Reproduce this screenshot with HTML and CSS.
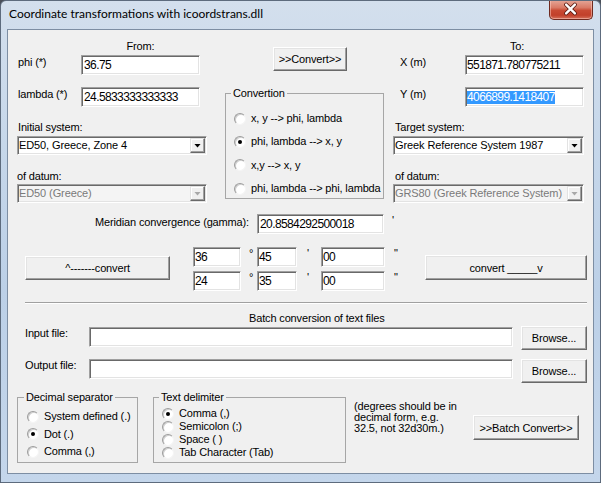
FILE: index.html
```html
<!DOCTYPE html>
<html>
<head>
<meta charset="utf-8">
<link rel="stylesheet" href="styles.css">
</head>
<body>
<div class="window">
  <div class="titlebar">
    <span class="title">Coordinate transformations with icoordstrans.dll</span>
    <div class="close">
      <svg width="44" height="20" viewBox="0 0 44 20">
        <path d="M17.5 5.5 L26.5 14.5 M26.5 5.5 L17.5 14.5" stroke="#5a1d14" stroke-width="4.2" stroke-linecap="round" fill="none"/>
        <path d="M17.5 5.5 L26.5 14.5 M26.5 5.5 L17.5 14.5" stroke="#ffffff" stroke-width="2.4" stroke-linecap="round" fill="none"/>
      </svg>
    </div>
  </div>
  <div class="client">
    <div class="top">
      <div class="col col-left">
        <div class="caption cap-from">From:</div>
        <div class="field-row first"><span class="lbl row-lbl">phi (*)</span><div class="edit w119">36.75</div></div>
        <div class="field-row second"><span class="lbl row-lbl">lambda (*)</span><div class="edit w119">24.5833333333333</div></div>
        <div class="lbl sys-lbl">Initial system:</div>
        <div class="combo"><span class="combo-text">ED50, Greece, Zone 4</span><span class="combo-btn"><i class="tri"></i></span></div>
        <div class="lbl datum-lbl">of datum:</div>
        <div class="combo disabled"><span class="combo-text">ED50 (Greece)</span><span class="combo-btn"><i class="tri"></i></span></div>
      </div>
      <div class="col col-mid">
        <div class="btn btn-convert">&gt;&gt;Convert&gt;&gt;</div>
        <fieldset class="group conv">
          <legend>Convertion</legend>
          <div class="radio-row"><span class="radio"></span><span class="rtext">x, y --&gt; phi, lambda</span></div>
          <div class="radio-row"><span class="radio on"></span><span class="rtext">phi, lambda --&gt; x, y</span></div>
          <div class="radio-row"><span class="radio"></span><span class="rtext">x,y --&gt; x, y</span></div>
          <div class="radio-row"><span class="radio"></span><span class="rtext">phi, lambda --&gt; phi, lambda</span></div>
        </fieldset>
      </div>
      <div class="col col-right">
        <div class="caption cap-to">To:</div>
        <div class="field-row first"><span class="lbl row-lbl rl">X (m)</span><div class="edit w119 np">551871.780775211</div></div>
        <div class="field-row second"><span class="lbl row-lbl rl">Y (m)</span><div class="edit w119 np"><span class="sel">4066899.1418407</span></div></div>
        <div class="lbl sys-lbl">Target system:</div>
        <div class="combo"><span class="combo-text">Greek Reference System 1987</span><span class="combo-btn"><i class="tri"></i></span></div>
        <div class="lbl datum-lbl">of datum:</div>
        <div class="combo disabled"><span class="combo-text">GRS80 (Greek Reference System)</span><span class="combo-btn"><i class="tri"></i></span></div>
      </div>
    </div>

    <div class="meridian">
      <span class="lbl mer-lbl">Meridian convergence (gamma):</span>
      <div class="edit mer-edit">20.8584292500018</div>
      <span class="lbl mer-mark">'</span>
    </div>

    <div class="dms">
      <div class="btn btn-up">^-------convert</div>
      <div class="dms-grid">
        <div class="edit">36</div><span class="mark m-deg">°</span>
        <div class="edit">45</div><span class="mark m-min">'</span>
        <div class="edit">00</div><span class="mark m-sec">"</span>
        <div class="edit">24</div><span class="mark m-deg">°</span>
        <div class="edit">35</div><span class="mark m-min">'</span>
        <div class="edit">00</div><span class="mark m-sec">"</span>
      </div>
      <div class="btn btn-down">convert _____v</div>
    </div>

    <div class="sep"></div>
    <div class="lbl batch-title">Batch conversion of text files</div>

    <div class="file-row in-row">
      <span class="lbl file-lbl">Input file:</span>
      <div class="edit file-edit"></div>
      <div class="btn browse">Browse...</div>
    </div>
    <div class="file-row out-row">
      <span class="lbl file-lbl">Output file:</span>
      <div class="edit file-edit"></div>
      <div class="btn browse">Browse...</div>
    </div>

    <div class="bottom">
      <fieldset class="group dec">
        <legend>Decimal separator</legend>
        <div class="radio-row"><span class="radio"></span><span class="rtext">System defined (.)</span></div>
        <div class="radio-row"><span class="radio on"></span><span class="rtext">Dot (.)</span></div>
        <div class="radio-row"><span class="radio"></span><span class="rtext">Comma (,)</span></div>
      </fieldset>
      <fieldset class="group delim">
        <legend>Text delimiter</legend>
        <div class="radio-row"><span class="radio on"></span><span class="rtext">Comma (,)</span></div>
        <div class="radio-row"><span class="radio"></span><span class="rtext">Semicolon (;)</span></div>
        <div class="radio-row"><span class="radio"></span><span class="rtext">Space ( )</span></div>
        <div class="radio-row"><span class="radio"></span><span class="rtext">Tab Character (Tab)</span></div>
      </fieldset>
      <div class="note">(degrees should be in<br>decimal form, e.g.<br>32.5, not 32d30m.)</div>
      <div class="btn btn-batch">&gt;&gt;Batch Convert&gt;&gt;</div>
    </div>
  </div>
</div>
</body>
</html>
```

FILE: styles.css
```css
html, body {
  margin: 0;
  padding: 0;
}
body {
  background: #4a505a;
  font-family: "Liberation Sans", Arial, sans-serif;
  font-size: 11px;
  color: #000;
}
.window {
  width: 601px;
  height: 483px;
  box-sizing: border-box;
  border: 1px solid #5d6b7d;
  border-radius: 6px 6px 0 0;
  background: linear-gradient(180deg, #d3dfed 0%, #c6d7ea 30%, #bcd0e7 60%, #c4d6eb 100%);
  overflow: hidden;
}
.titlebar {
  height: 28px;
  display: flex;
  justify-content: space-between;
  align-items: flex-start;
}
.title {
  font-family: Lato, "Open Sans", sans-serif;
  font-size: 12px;
  line-height: 15px;
  margin-top: 5px;
  padding-left: 8px;
  color: #000;
}
.close {
  width: 44px;
  height: 20px;
  margin-top: -1px;
  margin-right: 7px;
  box-sizing: border-box;
  border: 1px solid #6f2a1f;
  border-top: none;
  border-radius: 0 0 5px 5px;
  background: linear-gradient(180deg, #e6a899 0%, #d97a66 40%, #c84a33 55%, #c2402a 80%, #d4715b 100%);
  box-shadow: inset 0 0 0 1px rgba(255, 210, 200, 0.5);
  display: flex;
}
.close svg {
  margin-left: -1px;
  margin-top: -1px;
}
.client {
  margin-left: 6px;
  width: 585px;
  height: 443px;
  border: 1px solid #7d8ea3;
  background: #f0f0f0;
}

/* generic controls */
.lbl {
  display: block;
  font-size: 11px;
  line-height: 13px;
  letter-spacing: -0.15px;
  white-space: nowrap;
}
.edit {
  box-sizing: border-box;
  height: 20px;
  background: #fff;
  border: 1px solid;
  border-color: #a0a0a0 #ffffff #ffffff #a0a0a0;
  box-shadow: inset 1px 1px 0 #696969, inset -1px -1px 0 #e3e3e3;
  font-size: 12px;
  letter-spacing: -0.6px;
  line-height: 16px;
  padding: 1px 1px 1px 2px;
  white-space: nowrap;
  overflow: hidden;
}
.edit.np {
  padding-left: 1px;
}
.sel {
  background: #3399ff;
  color: #fff;
  display: inline-block;
  line-height: 13px;
}
.btn {
  box-sizing: border-box;
  background: #f0f0f0;
  border: 1px solid;
  border-color: #ffffff #696969 #696969 #ffffff;
  box-shadow: inset -1px -1px 0 #a0a0a0, inset 1px 1px 0 #e3e3e3;
  display: flex;
  align-items: center;
  justify-content: center;
  font-size: 11px;
  letter-spacing: -0.15px;
  white-space: nowrap;
}
.combo {
  box-sizing: border-box;
  height: 19px;
  display: flex;
  background: #fff;
  border: 1px solid;
  border-color: #a0a0a0 #ffffff #ffffff #a0a0a0;
  box-shadow: inset 1px 1px 0 #696969, inset -1px -1px 0 #e3e3e3;
}
.combo-text {
  flex: 1;
  min-width: 0;
  font-size: 11px;
  letter-spacing: -0.1px;
  line-height: 17px;
  padding-left: 1px;
  white-space: nowrap;
  overflow: hidden;
}
.combo-btn {
  flex: none;
  width: 15px;
  height: 15px;
  margin: 1px 1px 1px 0;
  box-sizing: border-box;
  background: #f0f0f0;
  border: 1px solid;
  border-color: #e3e3e3 #696969 #696969 #e3e3e3;
  box-shadow: inset -1px -1px 0 #a0a0a0, inset 1px 1px 0 #fff;
  display: flex;
  align-items: center;
  justify-content: center;
}
.tri {
  display: block;
  width: 7px;
  height: 4px;
  background: #000;
  clip-path: polygon(0 0, 100% 0, 50% 100%);
}
.combo.disabled {
  background: #f4f4f4;
}
.combo.disabled .combo-text {
  color: #7a7a7a;
}
.combo.disabled .tri {
  background: #a8a8a8;
}

/* radio */
.radio-row {
  display: flex;
  align-items: center;
}
.radio {
  position: relative;
  flex: none;
  width: 12px;
  height: 12px;
  box-sizing: border-box;
  border-radius: 50%;
  background: #fff;
  border: 1px solid;
  border-color: #9c9c9c #f4f4f4 #f4f4f4 #9c9c9c;
  box-shadow: inset 1px 1px 0 #cfcfcf;
}
.radio.on::after {
  content: "";
  position: absolute;
  left: 3px;
  top: 3px;
  width: 4px;
  height: 4px;
  border-radius: 50%;
  background: #000;
}
.rtext {
  margin-left: 5px;
  font-size: 11px;
  line-height: 13px;
  letter-spacing: -0.15px;
  white-space: nowrap;
}
.group {
  margin: 0;
  box-sizing: border-box;
  border: 1px solid #a6a6a6;
  min-width: 0;
}
.group legend {
  padding: 0 2px;
  margin-left: -3px;
  font-size: 11px;
  line-height: 13px;
  letter-spacing: -0.15px;
}

/* top block */
.top {
  display: flex;
  padding-left: 9px;
}
.col-left {
  width: 190px;
}
.col-mid {
  width: 159px;
  margin-left: 18px;
}
.col-right {
  width: 191px;
  margin-left: 9px;
}
.caption {
  font-size: 11px;
  line-height: 13px;
  letter-spacing: -0.15px;
  margin-top: 10px;
}
.cap-from {
  padding-left: 64px;
  width: 119px;
  text-align: center;
}
.cap-to {
  padding-left: 117px;
}
.field-row {
  display: flex;
  align-items: flex-start;
}
.field-row.first {
  margin-top: 2px;
}
.field-row.second {
  margin-top: 12px;
}
.row-lbl {
  width: 63px;
  padding-left: 1px;
  margin-top: 1px;
}
.row-lbl.rl {
  width: 65px;
  padding-left: 7px;
}
.w119 {
  width: 119px;
}
.sys-lbl {
  margin-top: 14px;
  padding-left: 1px;
}
.col-right .sys-lbl,
.col-right .datum-lbl {
  padding-left: 2px;
}
.combo + .datum-lbl {
  margin-top: 15px;
}
.sys-lbl + .combo {
  margin-top: 2px;
}
.datum-lbl + .combo {
  margin-top: 1px;
}
.btn-convert {
  width: 74px;
  height: 24px;
  margin-top: 17px;
  margin-left: 48px;
}
.conv {
  margin-top: 16px;
  height: 112px;
  padding: 7px 0 0 8px;
}
.conv .radio-row {
  height: 23.33px;
}

/* meridian */
.meridian {
  display: flex;
  align-items: flex-start;
  margin-top: 11px;
}
.mer-lbl {
  width: 241px;
  text-align: right;
  margin-top: 2px;
}
.mer-edit {
  width: 127px;
  margin-left: 8px;
}
.mer-mark {
  margin-left: 8px;
}

/* dms */
.dms {
  display: flex;
  align-items: flex-start;
  margin-top: 13px;
  height: 44px;
}
.btn-up {
  width: 145px;
  height: 24px;
  margin-left: 17px;
  margin-top: 9px;
}
.dms-grid {
  display: grid;
  grid-template-columns: 48px 16px 40px 24px 64px 40px;
  grid-template-rows: 20px 20px;
  row-gap: 4px;
  margin-left: 23px;
}
.dms-grid .edit {
  padding-left: 1px;
}
.mark {
  font-size: 11px;
  line-height: 13px;
}
.m-deg {
  padding-left: 8px;
}
.m-min {
  padding-left: 10px;
}
.m-sec {
  padding-left: 9px;
}
.btn-down {
  width: 162px;
  height: 25px;
  margin-top: 8px;
}

/* batch */
.sep {
  margin: 11px 6px 0 17px;
  height: 0;
  border-top: 1px solid #a0a0a0;
  border-bottom: 1px solid #ffffff;
}
.batch-title {
  margin-top: 8px;
  padding-left: 241px;
}
.file-row {
  display: flex;
  align-items: flex-start;
  padding-left: 17px;
}
.in-row {
  margin-top: 1px;
}
.out-row {
  margin-top: 9px;
}
.file-lbl {
  width: 64px;
}
.in-row .file-lbl,
.in-row .file-edit {
  margin-top: 1px;
}
.file-edit {
  width: 424px;
}
.browse {
  width: 66px;
  height: 24px;
  margin-left: 8px;
}

/* bottom */
.bottom {
  display: flex;
  align-items: flex-start;
  margin-top: 8px;
  padding-left: 9px;
}
.dec {
  width: 121px;
  height: 72px;
  padding: 4px 0 0 9px;
}
.dec .radio-row {
  height: 17.5px;
}
.delim {
  width: 193px;
  height: 72px;
  margin-left: 15px;
  padding: 3px 0 0 8px;
}
.delim .radio-row {
  height: 13px;
}
.note {
  width: 110px;
  margin-left: 8px;
  margin-top: 10px;
  font-size: 11px;
  line-height: 11px;
  letter-spacing: -0.15px;
  white-space: nowrap;
}
.btn-batch {
  width: 106px;
  height: 25px;
  margin-left: 9px;
  margin-top: 24px;
}
```
